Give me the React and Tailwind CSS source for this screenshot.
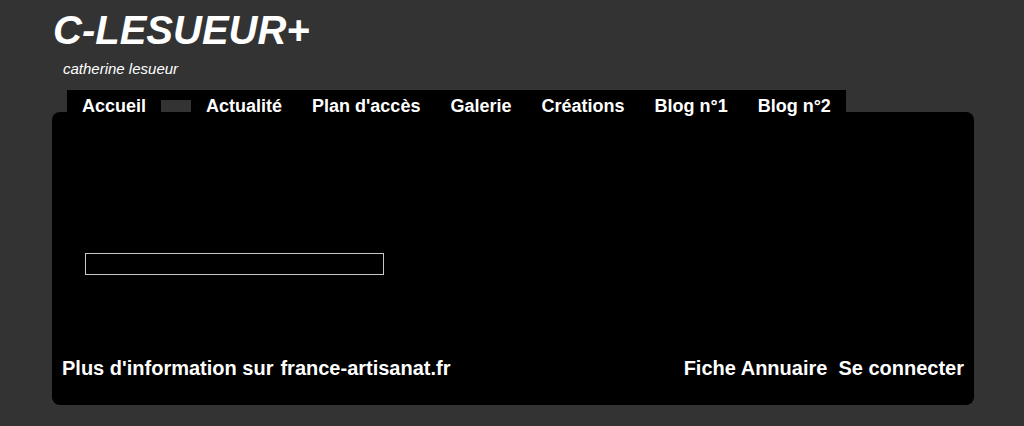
export default function App() {
  const navItems = ["Actualité", "Plan d'accès", "Galerie", "Créations", "Blog n°1", "Blog n°2"];

  return (
    <div className="min-h-screen h-[426px] bg-[#333333] text-white font-['Liberation_Sans',Arial,sans-serif] overflow-hidden">
      {/* Header */}
      <div className="pt-[10px] pl-[53px]">
        <h1 className="text-[40px] leading-[40px] font-bold italic">C-LESUEUR+</h1>
      </div>
      <p className="mt-[11px] pl-[63px] text-[15px] leading-[15px] italic">catherine lesueur</p>

      {/* Navigation */}
      <nav className="relative z-10 mt-[14px] ml-[67px] w-fit h-[22px] bg-black flex items-start">
        <a className="px-[15px] pt-[7px] text-[18px] leading-[18px] font-bold">Accueil</a>
        <span className="mt-[10px] w-[30px] h-[12px] bg-[#333333]" />
        {navItems.map((item) => (
          <a key={item} className="px-[15px] pt-[7px] text-[18px] leading-[18px] font-bold whitespace-nowrap">
            {item}
          </a>
        ))}
      </nav>

      {/* Main panel */}
      <div className="ml-[52px] w-[922px] h-[293px] bg-black rounded-lg flex flex-col px-[10px]">
        <input
          type="text"
          className="mt-[141px] ml-[23px] w-[299px] h-[22px] border border-[#c8c8c8] bg-black outline-none"
        />
        <div className="mt-auto mb-[27px] flex justify-between text-[20px] leading-[20px] font-bold">
          <div className="flex gap-[7px]">
            <span>Plus d'information sur</span>
            <a>france-artisanat.fr</a>
          </div>
          <div className="flex gap-[11px]">
            <a>Fiche Annuaire</a>
            <a>Se connecter</a>
          </div>
        </div>
      </div>
    </div>
  );
}
